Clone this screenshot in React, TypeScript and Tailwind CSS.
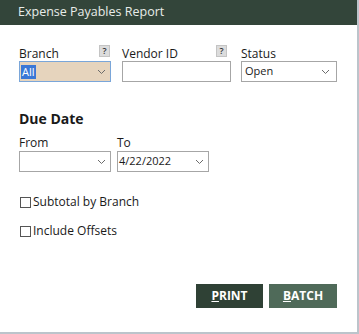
import React from "react";

const Chevron = () => (
  <svg width="9" height="6" viewBox="0 0 9 6" className="shrink-0">
    <path d="M1 1 L4.5 4.5 L8 1" fill="none" stroke="#6b6b6b" strokeWidth="1" />
  </svg>
);

const Help = () => (
  <div className="w-[11px] h-[12px] bg-[#dcdcdc] border border-[#c4c4c4] text-[9px] leading-[10px] text-[#333] flex items-center justify-center font-semibold">
    ?
  </div>
);

export default function App() {
  return (
    <div
      className="w-[359px] h-[334px] bg-white border-r-2 border-b-2 border-[#bcc4cb] flex flex-col text-[#1a1a1a]"
      style={{ fontFamily: '"Open Sans", "Noto Sans", sans-serif' }}
    >
      <div className="h-[25px] bg-[#33453a] flex items-center pl-[18px] text-[12.5px] text-[#e8ece9]">
        Expense Payables Report
      </div>
      <div className="flex flex-col pl-[19px] pt-[19px] text-[12px]">
        <div className="flex gap-[11px]">
          <div className="flex flex-col w-[92px]">
            <div className="flex items-end justify-between h-[17px] pr-[1px]">
              <span className="leading-[14px]">Branch</span>
              <div className="mb-[4px]"><Help /></div>
            </div>
            <div className="h-[21px] bg-[#e6d4bd] border border-[#7aa6d9] flex items-center justify-between pl-[1px] pr-[4px]">
              <span className="bg-[#3a77d6] text-white leading-[14px] px-[1px] text-[11px]">All</span>
              <Chevron />
            </div>
          </div>
          <div className="flex flex-col w-[109px]">
            <div className="flex items-end justify-between h-[17px] pr-[4px]">
              <span className="leading-[14px]">Vendor ID</span>
              <div className="mb-[4px]"><Help /></div>
            </div>
            <div className="h-[21px] bg-white border border-[#a6a6a6]" />
          </div>
          <div className="flex flex-col w-[96px] ml-[-1px]">
            <div className="flex items-end h-[17px]">
              <span className="leading-[14px]">Status</span>
            </div>
            <div className="h-[21px] bg-white border border-[#a6a6a6] flex items-center justify-between pl-[3px] pr-[6px]">
              <span className="text-[11px]">Open</span>
              <Chevron />
            </div>
          </div>
        </div>

        <div className="mt-[28px] text-[14px] font-bold leading-[18px]">Due Date</div>

        <div className="flex gap-[6px] mt-[8px]">
          <div className="flex flex-col w-[92px]">
            <span className="leading-[14px]">From</span>
            <div className="mt-[1px] h-[21px] bg-white border border-[#a6a6a6] flex items-center justify-end pr-[4px]">
              <Chevron />
            </div>
          </div>
          <div className="flex flex-col w-[92px]">
            <span className="leading-[14px]">To</span>
            <div className="mt-[1px] h-[21px] bg-white border border-[#a6a6a6] flex items-center justify-between pl-[1px] pr-[4px]">
              <span className="text-[11px]">4/22/2022</span>
              <Chevron />
            </div>
          </div>
        </div>

        <div className="flex flex-col gap-[17px] mt-[24px] pl-[1px]">
          <label className="flex items-center gap-[2px] h-[12px]">
            <span className="w-[11px] h-[11px] border border-[#555] bg-white" />
            <span>Subtotal by Branch</span>
          </label>
          <label className="flex items-center gap-[2px] h-[12px]">
            <span className="w-[11px] h-[11px] border border-[#555] bg-white" />
            <span>Include Offsets</span>
          </label>
        </div>

        <div className="flex gap-[6px] mt-[47px] ml-[177px]">
          <button className="w-[67px] h-[24px] bg-[#2f4135] text-white font-bold text-[12px] flex items-center justify-center">
            <span><span className="underline">P</span>RINT</span>
          </button>
          <button className="w-[68px] h-[24px] bg-[#4f6a59] text-white font-bold text-[12px] flex items-center justify-center">
            <span><span className="underline">B</span>ATCH</span>
          </button>
        </div>
      </div>
    </div>
  );
}
